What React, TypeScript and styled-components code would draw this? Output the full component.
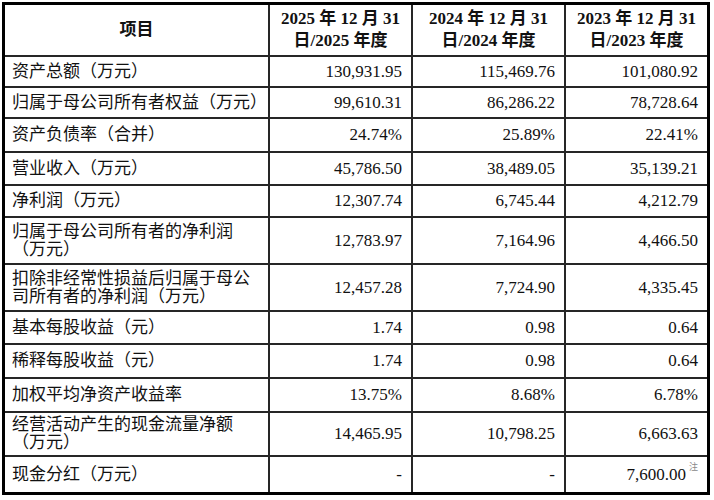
import React from 'react'
import styled, { createGlobalStyle } from 'styled-components'

const GlobalStyle = createGlobalStyle`
  html, body {
    margin: 0;
    padding: 0;
    background: #ffffff;
  }

  body {
    padding: 2px;
    font-family: 'Liberation Serif', 'Noto Sans CJK SC', serif;
    color: #111111;
  }
`;

const Sheet = styled.div`
  display: grid;
  grid-template-columns: 265px 143px 153px 141px;
  width: 708px;
  box-sizing: border-box;
  border: 3px solid #000000;
  font-size: 17px;
`;

const Cell = styled.div<{ $align: 'left' | 'center' | 'right'; $height: number; $lastCol?: boolean; $lastRow?: boolean; $bold?: boolean }>`
  display: flex;
  align-items: center;
  justify-content: ${p => p.$align === 'left' ? 'flex-start' : p.$align === 'center' ? 'center' : 'flex-end'};
  text-align: ${p => p.$align};
  height: ${p => p.$height}px;
  box-sizing: content-box;
  padding: ${p => p.$align === 'left' ? '0 0 0 7px' : p.$align === 'right' ? '0 9px 0 0' : '0'};
  border-right: ${p => p.$lastCol ? 'none' : '2px solid #262626'};
  border-bottom: ${p => p.$lastRow ? 'none' : '2px solid #262626'};
  font-weight: ${p => p.$bold ? 700 : 400};
  line-height: ${p => p.$bold ? '22px' : '18px'};
  white-space: nowrap;
  overflow: hidden;
`;

const Note = styled.span`
  font-size: 9px;
  color: #8a8a8a;
  align-self: flex-start;
  margin: 6px 0 0 3px;
  line-height: 1;
`;

type Row = { label: React.ReactNode; values: React.ReactNode[]; height: number }

const headers = [
  <>2025 年 12 月 31<br />日/2025 年度</>,
  <>2024 年 12 月 31<br />日/2024 年度</>,
  <>2023 年 12 月 31<br />日/2023 年度</>,
]

const rows: Row[] = [
  { label: '资产总额（万元）', values: ['130,931.95', '115,469.76', '101,080.92'], height: 29 },
  { label: '归属于母公司所有者权益（万元）', values: ['99,610.31', '86,286.22', '78,728.64'], height: 29 },
  { label: '资产负债率（合并）', values: ['24.74%', '25.89%', '22.41%'], height: 32 },
  { label: '营业收入（万元）', values: ['45,786.50', '38,489.05', '35,139.21'], height: 31 },
  { label: '净利润（万元）', values: ['12,307.74', '6,745.44', '4,212.79'], height: 30 },
  { label: <>归属于母公司所有者的净利润<br />（万元）</>, values: ['12,783.97', '7,164.96', '4,466.50'], height: 45 },
  { label: <>扣除非经常性损益后归属于母公<br />司所有者的净利润（万元）</>, values: ['12,457.28', '7,724.90', '4,335.45'], height: 45 },
  { label: '基本每股收益（元）', values: ['1.74', '0.98', '0.64'], height: 31 },
  { label: '稀释每股收益（元）', values: ['1.74', '0.98', '0.64'], height: 32 },
  { label: '加权平均净资产收益率', values: ['13.75%', '8.68%', '6.78%'], height: 32 },
  { label: <>经营活动产生的现金流量净额<br />（万元）</>, values: ['14,465.95', '10,798.25', '6,663.63'], height: 42 },
  { label: '现金分红（万元）', values: ['-', '-', <>7,600.00<Note>注</Note></>], height: 35 },
]

export default function App() {
  return (
    <>
      <GlobalStyle />
      <Sheet>
        <Cell $align="center" $height={50} $bold>项目</Cell>
        {headers.map((h, i) => (
          <Cell key={i} $align="center" $height={50} $bold $lastCol={i === headers.length - 1}>{h}</Cell>
        ))}
        {rows.map((row, r) => {
          const lastRow = r === rows.length - 1
          return (
            <React.Fragment key={r}>
              <Cell $align="left" $height={row.height} $lastRow={lastRow}>{row.label}</Cell>
              {row.values.map((v, c) => (
                <Cell key={c} $align="right" $height={row.height} $lastRow={lastRow} $lastCol={c === row.values.length - 1}>{v}</Cell>
              ))}
            </React.Fragment>
          )
        })}
      </Sheet>
    </>
  )
}
